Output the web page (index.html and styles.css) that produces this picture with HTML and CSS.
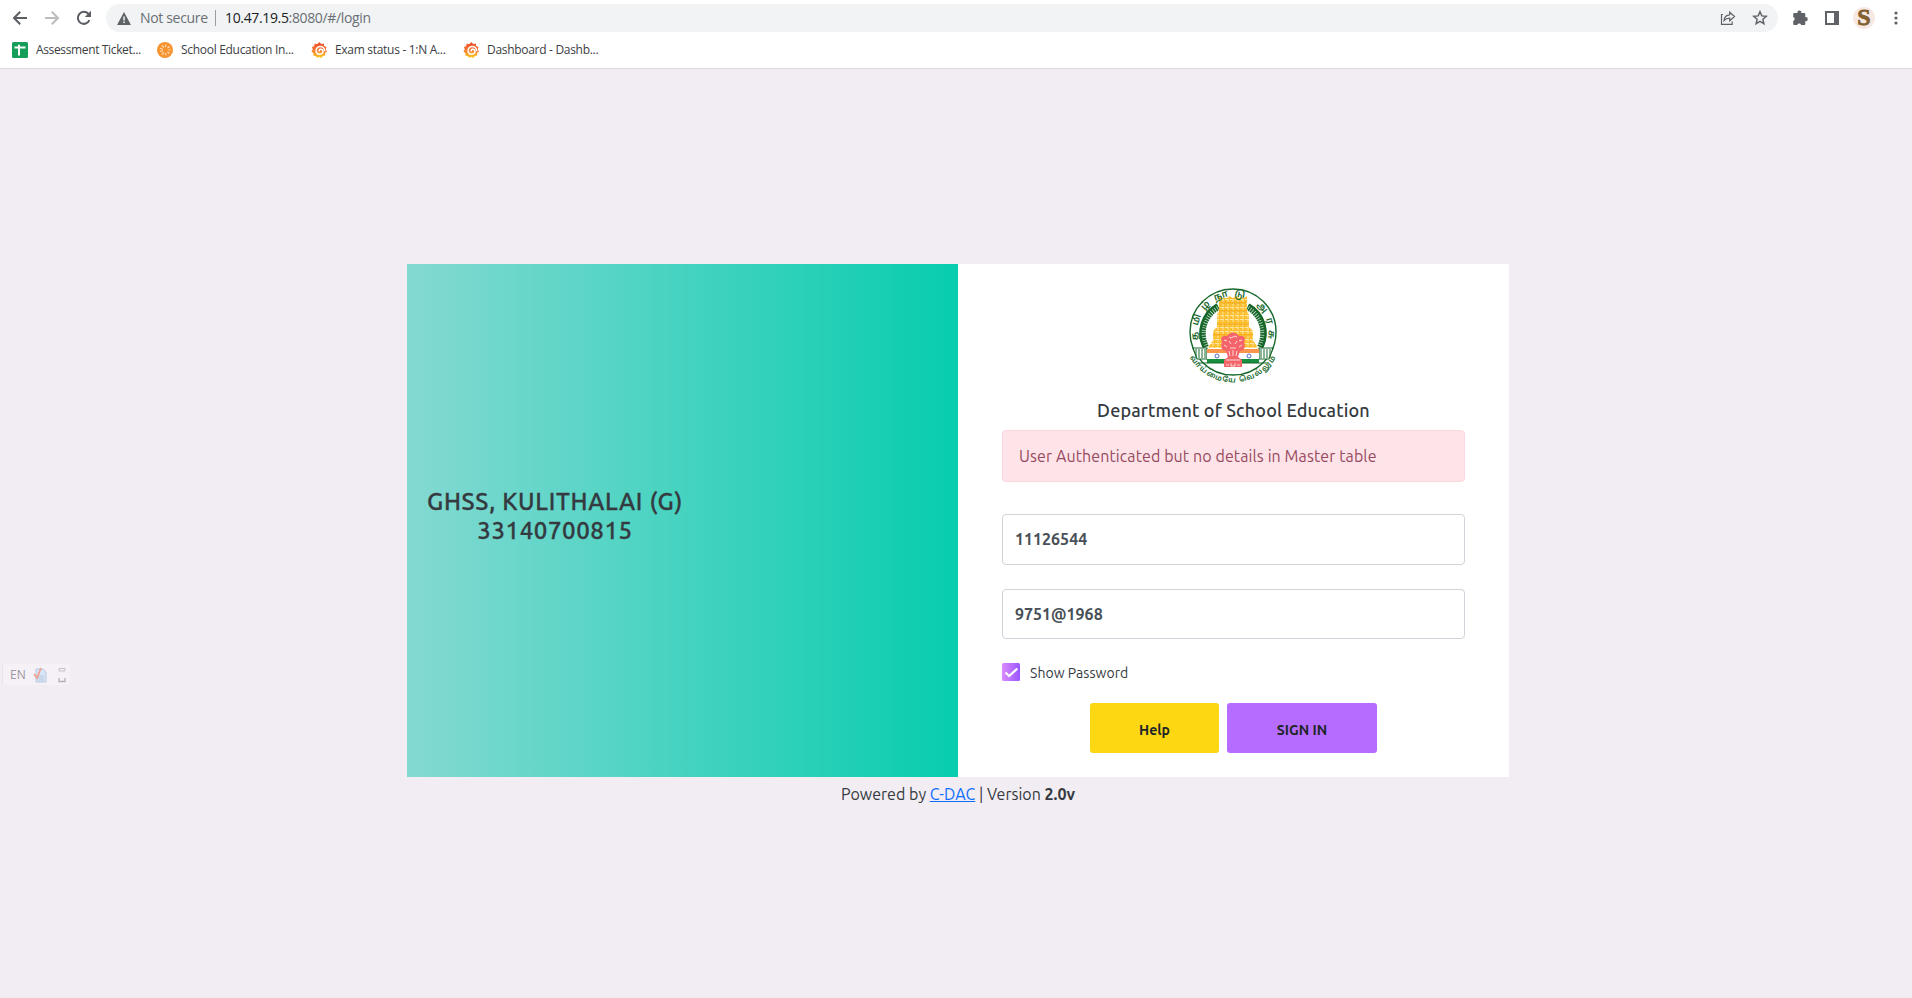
FILE: index.html
```html
<!DOCTYPE html>
<html lang="en">
<head>
<meta charset="utf-8">
<title>Login</title>
<link rel="stylesheet" href="styles.css">
</head>
<body>
<svg width="0" height="0" class="defs">
  <defs>
    <linearGradient id="gr" gradientUnits="userSpaceOnUse" x1="0" y1="2" x2="0" y2="15"><stop offset="0" stop-color="#ee5330"/><stop offset=".5" stop-color="#f58036"/><stop offset="1" stop-color="#fbc322"/></linearGradient>
    <symbol id="grafana" viewBox="0 0 16 16">
      <path fill="url(#gr)" d="M8.500 0l1.700 2 2.500-.4.500 2.300 2.300 1.200-.8 2.300 1.300 2-1.800 1.700.1 2.500-2.500.4L10.500 16l-2.300-1-2.300 1-1-2.100-2.600-.2.100-2.500L.4 9.500l1.300-2L1 5.100l2.200-1 .5-2.400 2.600.4z"/>
      <path fill="none" stroke="#fff" stroke-width="1.500" stroke-linecap="round" d="M13.600 8.500C13.200 5.800 11 4.300 8.900 4.500 6.500 4.700 4.900 6.600 5.100 8.900c.3 2.200 2 3.500 3.900 3.400 1.900-.1 3.200-1.500 3-3.100-.2-1.400-1.300-2.200-2.500-2-1 .2-1.500 1-1.200 1.700"/>
    </symbol>
  </defs>
</svg>
<header class="browser">
  <div class="toolbar">
    <svg class="nav" viewBox="0 0 16 16"><path d="M15 8H2.500M8.200 1.800L2 8l6.200 6.200" fill="none" stroke="#5a5e63" stroke-width="2"/></svg>
    <svg class="nav" viewBox="0 0 16 16"><path d="M1 8h12.500M7.800 1.800L14 8l-6.200 6.200" fill="none" stroke="#babcbe" stroke-width="2"/></svg>
    <svg class="nav" viewBox="0 0 16 16"><path d="M13.400 10.200A6 6 0 1 1 12.300 3.800L14 5.500" fill="none" stroke="#5a5e63" stroke-width="2"/><path d="M15 .8V7H8.800z" fill="#5a5e63"/></svg>
    <div class="omnibox">
      <svg class="warn" viewBox="0 0 14 13"><path d="M7 0l7 13H0z" fill="#5f6368"/><path d="M6.300 4.500h1.500v4H6.300zM6.300 9.600h1.500V11H6.300z" fill="#f1f3f4"/></svg>
      <span class="insecure">Not secure</span>
      <span class="divider"></span>
      <span class="url"><b>10.47.19.5</b>:8080/#/login</span>
      <svg class="share" viewBox="0 0 16 16"><path d="M3 4.500H1.500v9.800h10.700V11.500M4 10.500c.3-3.700 2.300-5.500 5.700-5.700V2.200l4.800 4.300-4.800 4.300V8.100C7 8.100 5.300 9 4 10.500z" fill="none" stroke="#5f6368" stroke-width="1.200"/></svg>
      <svg class="star" viewBox="0 0 16 16"><path d="M8 1.800l1.800 4.100 4.500.4-3.400 3 1 4.400L8 11.400l-3.900 2.300 1-4.400-3.400-3 4.500-.4z" fill="none" stroke="#5f6368" stroke-width="1.500"/></svg>
    </div>
    <svg class="puzzle" viewBox="0 0 16 16"><path d="M1.200 4q0-1 1-1h3.300a2 2 0 1 1 3.800 0h3q1 0 1 1v3.200a2 2 0 1 1 0 3.900V14q0 1-1 1H9.200a2.100 2.100 0 0 0-4 0H2.200q-1 0-1-1v-2.900a2.100 2.100 0 0 0 0-4z" fill="#5f6368"/></svg>
    <svg class="panel" viewBox="0 0 14 14"><path d="M1 1h12v12H1z" fill="none" stroke="#5f6368" stroke-width="2"/><path d="M9 1h4v12H9z" fill="#5f6368"/></svg>
    <span class="avatar">S</span>
    <svg class="dots" viewBox="0 0 4 14"><g fill="#5f6368"><circle cx="2" cy="2" r="1.600"/><circle cx="2" cy="7" r="1.600"/><circle cx="2" cy="12" r="1.600"/></g></svg>
  </div>
  <nav class="bookmarks">
    <a class="bm bm1"><svg viewBox="0 0 16 16"><rect width="16" height="16" rx="1.500" fill="#149e5a"/><path d="M2.500 5.500h11M7 2.800v10.800" stroke="#fff" stroke-width="2"/></svg><span>Assessment Ticket...</span></a>
    <a class="bm bm2"><svg viewBox="0 0 16 16"><circle cx="8" cy="8" r="8" fill="#f79431"/><path d="M5 3.500l2 2M9 2.500l-.5 2.500M12.500 4.500l-2 1.500M3 6.500l3 .8M3 9.500l3-.8M5 12.500l2-2M9 13.500l-.5-2.500M12.500 11.500l-2-1.500M11.500 8h2" stroke="#fee0bd" stroke-width="1.100"/></svg><span>School Education In...</span></a>
    <a class="bm bm3"><svg><use href="#grafana"/></svg><span>Exam status - 1:N A...</span></a>
    <a class="bm bm4"><svg><use href="#grafana"/></svg><span>Dashboard - Dashb...</span></a>
  </nav>
</header>
<main class="page">
  <section class="card">
    <div class="school"><h2><span class="name">GHSS, KULITHALAI (G)</span><br><span class="code">33140700815</span></h2></div>
    <form class="login">
      <svg class="emblem" viewBox="0 0 96 100">
        <defs>
          <path id="arcTop" d="M13.400 56A35.500 35.500 0 1 1 82.600 56"/>
          <path id="arcBottom" d="M3.500 71A50 50 0 0 0 92.500 71"/>
          <pattern id="bricks" width="5" height="4" patternUnits="userSpaceOnUse"><rect width="5" height="4" fill="#fcbf30"/><path d="M0 3.500h4M2 1h2" stroke="#fff0c4" stroke-width=".8"/></pattern>
        </defs>
        <circle cx="48" cy="48" r="43" fill="#fff" stroke="#17672b" stroke-width="1.400"/>
        <path d="M18.500 63A33 33 0 0 1 32 20.500M77.500 63A33 33 0 0 0 64 20.500" fill="none" stroke="#17672b" stroke-width="2.500"/>
        <path d="M21 63A30 30 0 0 1 33.500 23M75 63A30 30 0 0 0 62.500 23" fill="none" stroke="#17672b" stroke-width="6" stroke-dasharray="1.900 .6"/>
        <path d="M8 64h14v11H12zM88 64H74v11h10z" fill="#fff" stroke="#17672b" stroke-width="1.200"/>
        <path d="M11 65v9M14 65v9M17 65v9M20 65v9M76 65v9M79 65v9M82 65v9M85 65v9" stroke="#17672b"/>
        <path d="M34 12l3 2h5l2-2 4 2 4-2 2 2h5l3-2v14l2 5v12l4 4v9l5 8H23l5-8v-9l4-4V31l2-5z" fill="url(#bricks)"/>
        <path d="M35 19h26M34 27h28M32 40h32M28 51h40" stroke="#f5ad18" stroke-width="1.500"/>
        <path d="M22 65h52v4H22z" fill="#fb954d"/><path d="M22 69h52v6H22z" fill="#fff"/><path d="M22 75h52v4H22z" fill="#16903f"/>
        <path d="M13 79h70" stroke="#17672b"/>
        <g fill="#fff" stroke="#526cc0"><circle cx="32" cy="72" r="2"/><circle cx="64" cy="72" r="2"/></g>
        <path d="M44 50q4-3 8 0l2 2q5-1 6 3l-1 3q2 5-1 8l-3 1-2 6 4 3v7H39v-7l4-3-2-6-3-1q-3-3-1-8l-1-3q1-4 6-3z" fill="#f4646b"/>
        <path d="M44 53q2 2 4 0t4 0M39 56l3 1M57 56l-3 1M39 61l3 2M57 61l-3 2M44 57l2 3M52 57l-2 3M45 64h6M44 67l1 5M48 66v6M52 67l-1 5M41 76h14M41 81h3M46 79v3h4v-3M52 81h3" fill="none" stroke="#ffe3e0" stroke-width=".9"/>
        <text class="motto-top"><textPath href="#arcTop" textLength="126">தமிழ்நாடு அரசு</textPath></text>
        <text class="motto-bottom"><textPath href="#arcBottom" startOffset="3" textLength="103">வாய்மையே வெல்லும்</textPath></text>
      </svg>
      <h1><span>Department of School Education</span></h1>
      <div class="alert"><span>User Authenticated but no details in Master table</span></div>
      <div class="field field-user"><span>11126544</span></div>
      <div class="field field-pass"><span>9751@1968</span></div>
      <label class="show"><svg viewBox="0 0 18 18"><defs><linearGradient id="cb"><stop stop-color="#da8cff"/><stop offset="1" stop-color="#9a55ff"/></linearGradient></defs><rect width="18" height="18" rx="1.500" fill="url(#cb)"/><path d="M3.500 9.500l3.600 3.600L15.300 5.600" fill="none" stroke="#fff" stroke-width="2.100"/></svg><span>Show Password</span></label>
      <div class="actions"><button type="button" class="help"><span>Help</span></button><button type="button" class="signin"><span>SIGN IN</span></button></div>
    </form>
  </section>
  <footer><span>Powered by <a>C-DAC</a> | Version <b>2.0v</b></span></footer>
  <aside class="langbar"><span class="lang">EN</span>
    <svg class="doc" viewBox="0 0 14 16"><path d="M3 2h7l3 3v10H3z" fill="#d9e6f6" stroke="#b8c9e0"/><path d="M5 9h6M5 11h6M5 13h6" stroke="#b8c9e0"/><path d="M1 7l3 4L8 1" fill="none" stroke="#f2a092" stroke-width="1.800"/></svg>
    <svg class="tray" viewBox="0 0 8 16"><path d="M1 1.500h6v2.500H1z" fill="none" stroke="#c5c1c8"/><path d="M1 11v3.500h6V11" fill="none" stroke="#b5b1b8" stroke-width="1.300"/></svg>
  </aside>
</main>
</body>
</html>
```
FILE: styles.css
```css
* { box-sizing: border-box; }
body { margin: 0; height: 998px; display: flex; flex-direction: column; overflow: hidden; background: #f2edf3; color: #343a40; font-family: Ubuntu, "Noto Sans", sans-serif; }
.defs { display: block; position: absolute; }
svg { display: block; flex: none; }
span { white-space: nowrap; }

.browser { height: 69px; flex: none; background: #fff; border-bottom: 1px solid #d9d8da; font-family: "Segoe UI", "Open Sans", sans-serif; }
.toolbar { height: 36px; display: flex; align-items: center; padding-left: 12px; }
.nav { width: 16px; height: 16px; margin-right: 16px; }
.omnibox { width: 1672px; height: 28px; margin-left: -2px; border-radius: 14px; background: #f1f3f4; display: flex; align-items: center; padding: 0 10px 0 11px; font-size: 14px; color: #6b6f74; }
.warn { width: 14px; height: 13px; }
.insecure { margin-left: 9px; width: 67px; letter-spacing: -.33px; }
.insecure, .url { margin-top: -1px; }
.divider { width: 1px; height: 16px; background: #9a9da1; margin: 0 9px 0 8px; }
.url { letter-spacing: -.35px; }
.url b { font-weight: 400; color: #202124; }
.share { width: 16px; height: 16px; margin-left: auto; margin-right: 16px; }
.star { width: 16px; height: 16px; }
.puzzle { width: 16px; height: 16px; margin-left: 14px; }
.panel { width: 14px; height: 14px; margin-left: 17px; }
.avatar { width: 22px; height: 22px; margin-left: 14px; border-radius: 50%; background: #f8e8e3; color: #82602f; font: bold 24px/21px "Liberation Serif", serif; text-align: center; -webkit-text-stroke: .8px #82602f; }
.dots { width: 4px; height: 14px; margin-left: 19px; }
.bookmarks { display: flex; padding-left: 12px; height: 28px; align-items: center; font-size: 12px; color: #3c4043; }
.bm { display: flex; align-items: center; gap: 8px; }
.bm svg { width: 16px; height: 16px; }
.bm1 { width: 145px; }
.bm2 { width: 154px; }
.bm3 { width: 152px; }
.bm span { letter-spacing: -.3px; margin-top: -1px; }
.bm1 span { letter-spacing: -.36px; }

.page { flex: 1; position: relative; padding-top: 195px; }
.card { width: 1102px; height: 513px; margin-left: 407px; display: flex; background: #fff; }
.school { width: 551px; background: linear-gradient(90deg, #84d9d2, #07cdae); display: flex; align-items: center; }
.school h2 { margin: -10px 0 0 20px; width: 256px; text-align: center; font-size: 24px; font-weight: 500; line-height: 29px; letter-spacing: .68px; -webkit-text-stroke: .3px currentColor; display: block; }
.school .code { letter-spacing: .6px; }
.login { width: 551px; padding: 20px 44px 0; display: flex; flex-direction: column; }
.emblem { width: 96px; height: 100px; align-self: center; overflow: visible; margin-left: -1px; }
.emblem text { font-family: "Noto Sans Tamil", "Noto Sans", sans-serif; fill: #17672b; }
.motto-top { font-size: 9.5px; font-weight: 600; }
.motto-bottom { font-size: 7.5px; font-weight: 600; }
h1 { margin: 14px 0 0; height: 32px; font-size: 18px; line-height: 24px; font-weight: 500; letter-spacing: .14px; text-align: center; }
.alert { height: 52px; border: 1px solid #fed6dd; border-radius: 4px; background: #fee3e8; color: #974b5f; padding: 0 16px; line-height: 51px; font-size: 16px; letter-spacing: .1px; }
.field { height: 51px; border: 1px solid #ced4da; border-radius: 4px; padding: 0 12px; font-size: 16px; font-weight: 600; line-height: 49px; color: #495057; }
.field-user { margin-top: 32px; }
.field-pass { margin-top: 24px; height: 50px; }
.show { display: flex; align-items: center; height: 18px; margin-top: 24px; gap: 10px; font-size: 14px; }
.show svg { width: 18px; height: 18px; }
.show span { margin-top: 2px; letter-spacing: .05px; }
.actions { display: flex; gap: 8px; margin: 22px 0 0 88px; }
button { height: 50px; border: 0; border-radius: 3px; padding: 3px 0 0; font: bold 14px Ubuntu, "Noto Sans", sans-serif; color: #212529; }
.help { width: 129px; background: #fed713; }
.signin { width: 150px; background: #b66dff; }
footer { margin: 5px 0 0 841px; font-size: 16px; line-height: 24px; letter-spacing: .02px; }
footer a { color: #0d6efd; text-decoration: underline; }
footer b { font-weight: 700; }
.langbar { position: absolute; left: 2px; top: 595px; width: 68px; height: 21px; display: flex; align-items: center; padding-left: 7px; background: #f5f1f6; border-left: 1px dotted #dcd6de; font: 12px "Open Sans", sans-serif; color: #9b979e; }
.doc { width: 14px; height: 16px; margin-left: 7px; }
.tray { width: 8px; height: 16px; margin-left: 11px; }
```
